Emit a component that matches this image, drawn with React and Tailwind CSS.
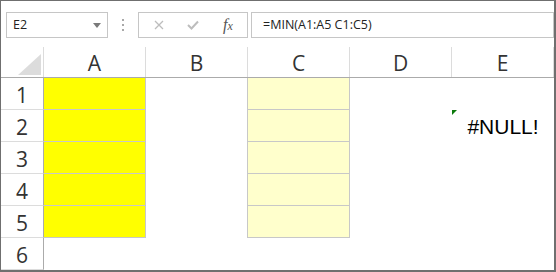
export default function App() {
  const cols = ["A", "B", "C", "D", "E"];
  const rows = [1, 2, 3, 4, 5, 6];
  const cellCls = (c, r) => {
    const base = "w-[102px] h-full box-border relative flex items-center justify-center";
    if (r <= 5) {
      if (c === "A") return base + " bg-[#ffff00] border-r border-b border-[#c8c8c8]";
      if (c === "B") return base + " border-r border-[#c8c8c8]";
      if (c === "C") return base + " bg-[#ffffcc] border-r border-b border-[#c8c8c8]";
    }
    return base;
  };
  return (
    <div className="w-[556px] h-[272px] box-border border-l border-t border-r-2 border-b-2 border-[#6f6f6f] bg-white overflow-hidden flex flex-col">
      {/* formula bar */}
      <div className="flex items-center mt-[11px] h-[26px] shrink-0 font-['Open_Sans',sans-serif] text-[12.5px] text-[#222]">
        <div className="ml-[5px] w-[102px] h-[26px] box-border border border-[#c6c6c6] flex items-center justify-between pl-[6px] pr-[6px]">
          <span className="leading-none">E2</span>
          <svg width="8" height="5" viewBox="0 0 8 5" className="mt-[1px]">
            <polygon points="0,0 8,0 4,5" fill="#7a7a7a" />
          </svg>
        </div>
        <div className="ml-[14px] flex flex-col gap-[3px] w-[2px]">
          <div className="w-[2px] h-[2px] bg-[#a8a8a8]" />
          <div className="w-[2px] h-[2px] bg-[#a8a8a8]" />
          <div className="w-[2px] h-[2px] bg-[#a8a8a8]" />
        </div>
        <div className="ml-[14px] w-[110px] h-[26px] box-border border border-[#c6c6c6] flex items-center">
          <svg width="10" height="10" viewBox="0 0 10 10" className="ml-[15px]">
            <path d="M1 1 L9 9 M9 1 L1 9" stroke="#bdbdbd" strokeWidth="1.3" fill="none" />
          </svg>
          <svg width="12" height="10" viewBox="0 0 12 10" className="ml-[23px]">
            <path d="M1 5 L4.5 8.5 L11 1.5" stroke="#bdbdbd" strokeWidth="2" fill="none" />
          </svg>
          <span className="ml-[24px] font-['Liberation_Serif',serif] italic text-[16px] text-[#555] leading-none">
            f<span className="text-[12px]">x</span>
          </span>
        </div>
        <div className="ml-[3px] flex-1 h-[26px] box-border border border-[#c6c6c6] flex items-center pl-[11px]">
          <span className="leading-none">=MIN(A1:A5 C1:C5)</span>
        </div>
      </div>

      {/* grid */}
      <div className="mt-[9px] flex flex-col">
        <div className="flex h-[31px] box-border border-b border-[#ababab]">
          <div className="w-[43px] h-full box-border border-r border-[#dcdcdc] relative">
            <svg width="23" height="21" viewBox="0 0 23 21" className="absolute right-[2px] bottom-[2px]">
              <polygon points="23,0 23,21 0,21" fill="#dcdcdc" />
            </svg>
          </div>
          {cols.map((c) => (
            <div
              key={c}
              className="w-[102px] h-full box-border border-r border-[#dcdcdc] flex items-center justify-center pt-[4px] font-['Open_Sans',sans-serif] text-[21px] text-[#333]"
            >
              {c}
            </div>
          ))}
        </div>
        {rows.map((r) => (
          <div key={r} className="flex h-[32px]">
            <div className="w-[43px] h-full box-border border-r border-r-[#ababab] border-b border-b-[#dcdcdc] flex items-center justify-center pt-[4px] font-['Open_Sans',sans-serif] text-[21px] text-[#333]">
              {r}
            </div>
            {cols.map((c) => (
              <div key={c} className={cellCls(c, r)}>
                {c === "E" && r === 2 && (
                  <>
                    <svg width="5" height="5" viewBox="0 0 5 5" className="absolute left-0 top-0">
                      <polygon points="0,0 5,0 0,5" fill="#0b7a0b" />
                    </svg>
                    <span className="font-['Liberation_Sans',sans-serif] text-[21px] text-black leading-none">#NULL!</span>
                  </>
                )}
              </div>
            ))}
          </div>
        ))}
      </div>
    </div>
  );
}
